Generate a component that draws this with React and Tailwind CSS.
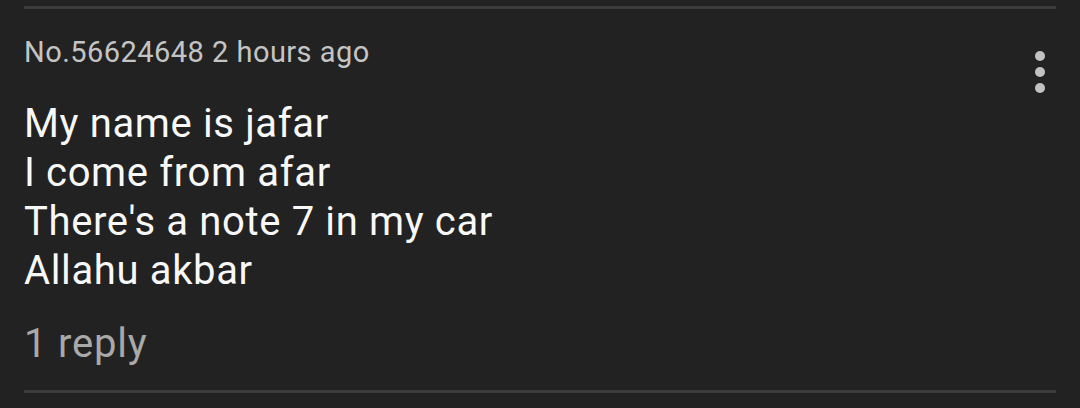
export default function App() {
  const lines = ["My name is jafar", "I come from afar", "There's a note 7 in my car", "Allahu akbar"];

  return (
    <div className="w-[1080px] h-[408px] bg-[#222222] overflow-hidden" style={{ fontFamily: "Roboto, sans-serif" }}>
      <div className="ml-6 mr-6 pt-[6px]">
        <div className="h-[3px] bg-[#3c3c3c]" />
        <div className="flex justify-between">
          <div className="min-w-0">
            <div className="mt-[26px] text-[29px] leading-[34px] tracking-[0.016em] text-[#c4c4c4]">No.56624648 2 hours ago</div>
            <div className="mt-[30px] text-[40px] leading-[49px] tracking-[0.016em] text-[#f8f8f8]">
              {lines.map((l) => (
                <div key={l}>{l}</div>
              ))}
            </div>
            <div className="mt-[26px] text-[40px] leading-[46px] tracking-[0.02em] text-[#a9a9a9]">1 reply</div>
          </div>
          <div className="flex flex-col gap-[6px] mt-[42px] mr-[11px]">
            <span className="w-[10px] h-[10px] rounded-full bg-[#c2c2c2]" />
            <span className="w-[10px] h-[10px] rounded-full bg-[#c2c2c2]" />
            <span className="w-[10px] h-[10px] rounded-full bg-[#c2c2c2]" />
          </div>
        </div>
        <div className="mt-[23px] h-[3px] bg-[#3c3c3c]" />
      </div>
    </div>
  );
}
